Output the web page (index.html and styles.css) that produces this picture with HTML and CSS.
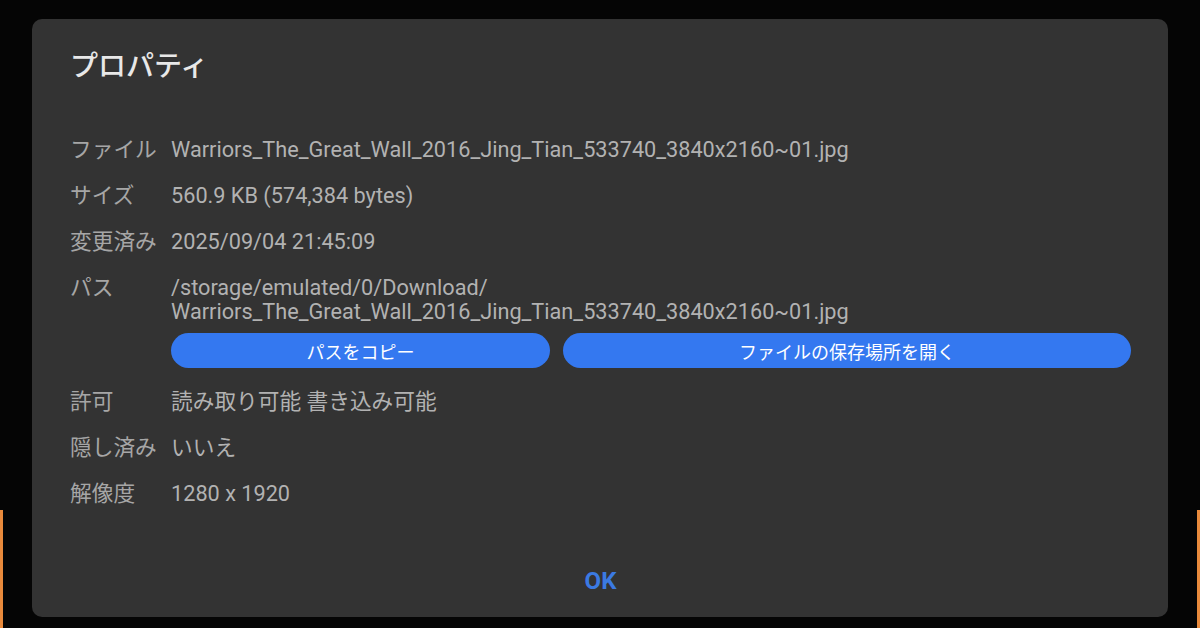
FILE: index.html
```html
<!DOCTYPE html>
<html lang="ja">
<head>
  <meta charset="UTF-8">
  <meta name="viewport" content="width=device-width, initial-scale=1.0">
  <title>プロパティ</title>
  <link rel="stylesheet" href="styles.css">
</head>
<body>
  <!-- 背景のオレンジの縁 -->
  <div class="edge edge-left"></div>
  <div class="edge edge-right"></div>

  <div class="dialog">
    <h1 class="dialog-title">プロパティ</h1>

    <div class="info">
      <div class="label">ファイル</div>
      <div class="value">Warriors_The_Great_Wall_2016_Jing_Tian_533740_3840x2160~01.jpg</div>

      <div class="label">サイズ</div>
      <div class="value">560.9 KB (574,384 bytes)</div>

      <div class="label">変更済み</div>
      <div class="value">2025/09/04 21:45:09</div>

      <div class="label">パス</div>
      <div class="value">
        <div>/storage/emulated/0/Download/</div>
        <div>Warriors_The_Great_Wall_2016_Jing_Tian_533740_3840x2160~01.jpg</div>
        <div class="path-buttons">
          <button class="pill copy">パスをコピー</button>
          <button class="pill open">ファイルの保存場所を開く</button>
        </div>
      </div>

      <div class="label">許可</div>
      <div class="value">読み取り可能 書き込み可能</div>

      <div class="label">隠し済み</div>
      <div class="value">いいえ</div>

      <div class="label">解像度</div>
      <div class="value">1280 x 1920</div>
    </div>

    <div class="dialog-actions">
      <button class="ok-btn">OK</button>
    </div>
  </div>
</body>
</html>
```

FILE: styles.css
```css
/* 全体 */
body {
  margin: 0;
  padding: 19px 32px 11px;
  height: 628px;
  box-sizing: border-box;
  background-color: #050505;
  font-family: Roboto, "Noto Sans CJK JP", sans-serif;
  overflow: hidden;
  position: relative;
}

/* 背景の縁 */
.edge {
  position: absolute;
  bottom: 0;
  width: 3px;
  height: 118px;
  background-color: #e98a3c;
}

.edge-left {
  left: 0;
}

.edge-right {
  right: 0;
}

/* ダイアログ */
.dialog {
  height: 598px;
  background-color: #333333;
  border-radius: 10px;
  padding: 31px 37px 0 38px;
  box-sizing: border-box;
  display: flex;
  flex-direction: column;
  position: relative;
}

.dialog-title {
  margin: 0;
  font-size: 28px;
  line-height: 34px;
  font-weight: 500;
  color: #e8e8e8;
}

/* 情報一覧 */
.info {
  margin-top: 54px;
  display: grid;
  grid-template-columns: 101px 1fr;
  row-gap: 22px;
  font-size: 21.7px;
  line-height: 24px;
}

.label {
  color: #a6a6a6;
  white-space: nowrap;
}

.value {
  color: #b2b2b2;
}

.path-buttons {
  display: flex;
  gap: 13px;
  margin-top: 9px;
}

.pill {
  height: 35px;
  border: none;
  border-radius: 18px;
  background-color: #3478f0;
  color: #ffffff;
  font-family: Roboto, "Noto Sans CJK JP", sans-serif;
  font-size: 18px;
  padding: 0;
}

.pill.copy {
  flex: 2;
}

.pill.open {
  flex: 3;
}

/* ボタン */
.dialog-actions {
  margin-top: auto;
  display: flex;
  justify-content: center;
  padding-bottom: 23px;
}

.ok-btn {
  background: transparent;
  border: none;
  color: #3b7ae2;
  font-family: Roboto, sans-serif;
  font-size: 24px;
  font-weight: 700;
  line-height: 26px;
  padding: 0 8px;
}
```
